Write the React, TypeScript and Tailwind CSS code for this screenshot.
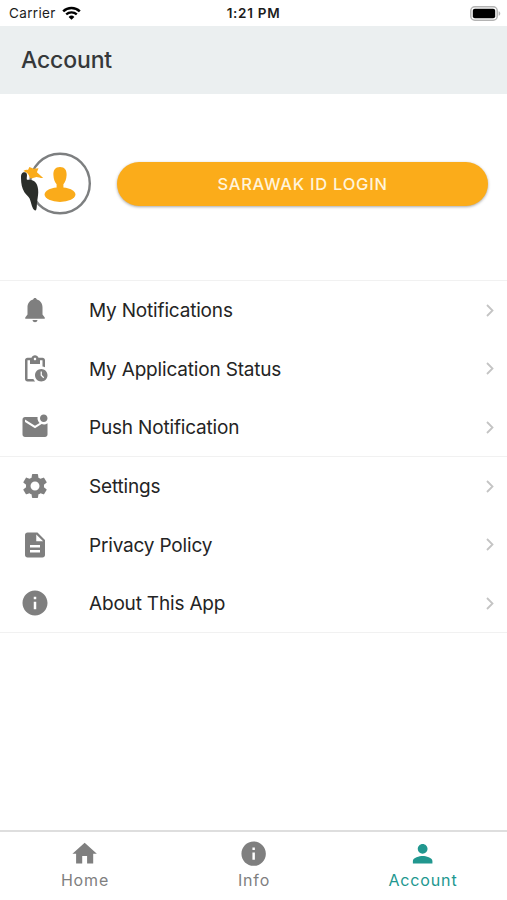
import React, { useState } from "react";
import {
  MdDescription,
  MdHome,
  MdInfo,
  MdMarkEmailUnread,
  MdPendingActions,
  MdPerson,
  MdSettings,
} from "react-icons/md";

interface Item {
  label: string;
  icon: React.ComponentType<{ className?: string }>;
}

const BellIcon = ({ className }: { className?: string }) => (
  <svg viewBox="0 0 24 24" fill="currentColor" className={className}>
    <path d="M12 2.300c-.8 0-1.300.5-1.500 1.200C7.600 4.300 6 6.700 6 9.900v5.600L4.200 18v1h15.600v-1L18 15.500V9.900c0-3.200-1.600-5.600-4.500-6.400-.2-.7-.7-1.200-1.500-1.200z" />
    <path d="M10 20h4c-.2 1.100-1 1.800-2 1.800s-1.800-.7-2-1.800z" />
  </svg>
);

const groups: Item[][] = [
  [
    { label: "My Notifications", icon: BellIcon },
    { label: "My Application Status", icon: MdPendingActions },
    { label: "Push Notification", icon: MdMarkEmailUnread },
  ],
  [
    { label: "Settings", icon: MdSettings },
    { label: "Privacy Policy", icon: MdDescription },
    { label: "About This App", icon: MdInfo },
  ],
];

const tabs: Item[] = [
  { label: "Home", icon: MdHome },
  { label: "Info", icon: MdInfo },
  { label: "Account", icon: MdPerson },
];

const StatusBar = () => (
  <div className="grid h-[26px] shrink-0 grid-cols-3 items-center pl-[9px] pr-[6px] text-[13.5px] text-[#1c1c1c]">
    <div className="flex items-center gap-[6px]">
      <span className="pt-px tracking-[0.35px]">Carrier</span>
      <svg width="19" height="14" viewBox="0 0 19 14" fill="none">
        <path d="M1.2 5.3a12 12 0 0 1 16.6 0" stroke="#000" strokeWidth="2.5" />
        <path d="M4.2 8.4a7.7 7.7 0 0 1 10.6 0" stroke="#000" strokeWidth="2.3" />
        <path d="M9.5 13.8 6.6 10.9a4.1 4.1 0 0 1 5.8 0z" fill="#000" />
      </svg>
    </div>
    <span className="pr-[3px] pt-px text-center font-semibold tracking-[0.7px]">
      1:21 PM
    </span>
    <svg className="justify-self-end" width="31" height="15" viewBox="0 0 31 15">
      <rect x="0.8" y="0.8" width="26.4" height="13.4" rx="4" fill="#fff" stroke="#b3b3b3" strokeWidth="1.5" />
      <rect x="2.8" y="2.8" width="22.4" height="9.4" rx="2" fill="#000" />
      <path d="M28.6 5.2c2.2.6 2.2 4 0 4.6z" fill="#b3b3b3" />
    </svg>
  </div>
);

const Avatar = () => (
  <svg width="74" height="66" viewBox="0 0 74 66" className="shrink-0">
    <circle cx="42" cy="33.5" r="29.8" fill="#fff" stroke="#7d7f80" strokeWidth="2.4" />
    <ellipse cx="42" cy="44.6" rx="15.4" ry="7.4" fill="#faab1a" />
    <path
      d="M42 17c4.800 0 6.800 3.100 6.600 8-.2 4.600-1.400 7.300-3.200 9.200V39h-6.800v-4.800c-1.800-1.900-3-4.600-3.200-9.200-.2-4.900 1.800-8 6.600-8z"
      fill="#faab1a"
    />
    <path
      d="M5.500 22.300c-2 .4-2.700 3-2.500 6 .1 5.400.9 9.900 3.400 13.900 1.400 2.200 3.700 3.900 5.200 6.300 1.400 3.200 1.700 7 3.400 10 .9 1.700 2.700 2.700 3.300 1 .8-2.500.4-5.500.9-8.500.5-3.700 1.400-7.500.9-11.500-.4-3.600-1.400-6.300-3.500-8-2.400-1.900-5.200-1.800-7.700-1.800-.5-2 .5-3.800-.1-5.900-.4-1.300-1.700-1.900-3.300-1.500z"
      fill="#2b2e2a"
    />
    <path
      d="M5.300 20.900c1.700-.9 3.300-1.300 4.700-.9l1.400-3 4.300 1.700 4.800-.5-1.600 4.100 6.300 5.700c-2.500.2-4.700-.8-7-1-2 .6-3.800 1.600-6.100 1.200-1-2.700-1.700-5.800-6.800-7.300z"
      fill="#faab1a"
    />
  </svg>
);

const Row = ({ label, icon: Icon }: Item) => (
  <li className="flex h-[58.6px] items-center pl-5 pr-[13px]">
    <Icon className="size-[30px] shrink-0 text-[#7f7f7f]" />
    <span className="ml-[39px] flex-1 pt-[2px] text-[19px] tracking-[-0.18px] text-[#242424]">
      {label}
    </span>
    <svg width="8" height="13" viewBox="0 0 8 13" fill="none" stroke="#c4c4c4" strokeWidth="1.8">
      <path d="M1 1l5.500 5.500L1 12" />
    </svg>
  </li>
);

export default function App() {
  const [active, setActive] = useState<string>("Account");

  return (
    <div className="flex h-screen flex-col overflow-hidden bg-white font-['Inter',sans-serif]">
      <StatusBar />
      <header className="flex h-[68px] shrink-0 items-center bg-[#ebeff0] pl-[21px]">
        <h1 className="text-[23px] font-medium tracking-[-0.15px] text-[#35383a]">
          Account
        </h1>
      </header>

      <main className="flex-1">
        <section className="flex h-[186px] items-center gap-[25px] pl-[18px] pr-[19px] pb-[7px]">
          <div className="pb-[2px]">
            <Avatar />
          </div>
          <button className="h-[44px] flex-1 rounded-full bg-[#fbac1a] pt-px text-[16.5px] font-medium tracking-[0.75px] text-[#fff4dc] shadow-[0_1px_3px_rgba(0,0,0,0.35)]">
            SARAWAK ID LOGIN
          </button>
        </section>
        {groups.map((items, i) => (
          <ul key={i} className="h-[176px] border-t border-[#f1f1f1] last:h-[177px] last:border-b">
            {items.map((item) => (
              <Row key={item.label} {...item} />
            ))}
          </ul>
        ))}
      </main>

      <nav className="grid h-[70px] shrink-0 grid-cols-3 border-t-2 border-[#dedede]">
        {tabs.map(({ label, icon: Icon }) => (
          <button
            key={label}
            onClick={() => setActive(label)}
            className={`flex flex-col items-center pt-[7px] ${
              active === label ? "text-[#21978f]" : "text-[#7f7f7f]"
            }`}
          >
            <Icon className="size-[29.3px]" />
            <span className="pl-px text-[16px] leading-[25px] tracking-[0.85px]">{label}</span>
          </button>
        ))}
      </nav>
    </div>
  );
}
